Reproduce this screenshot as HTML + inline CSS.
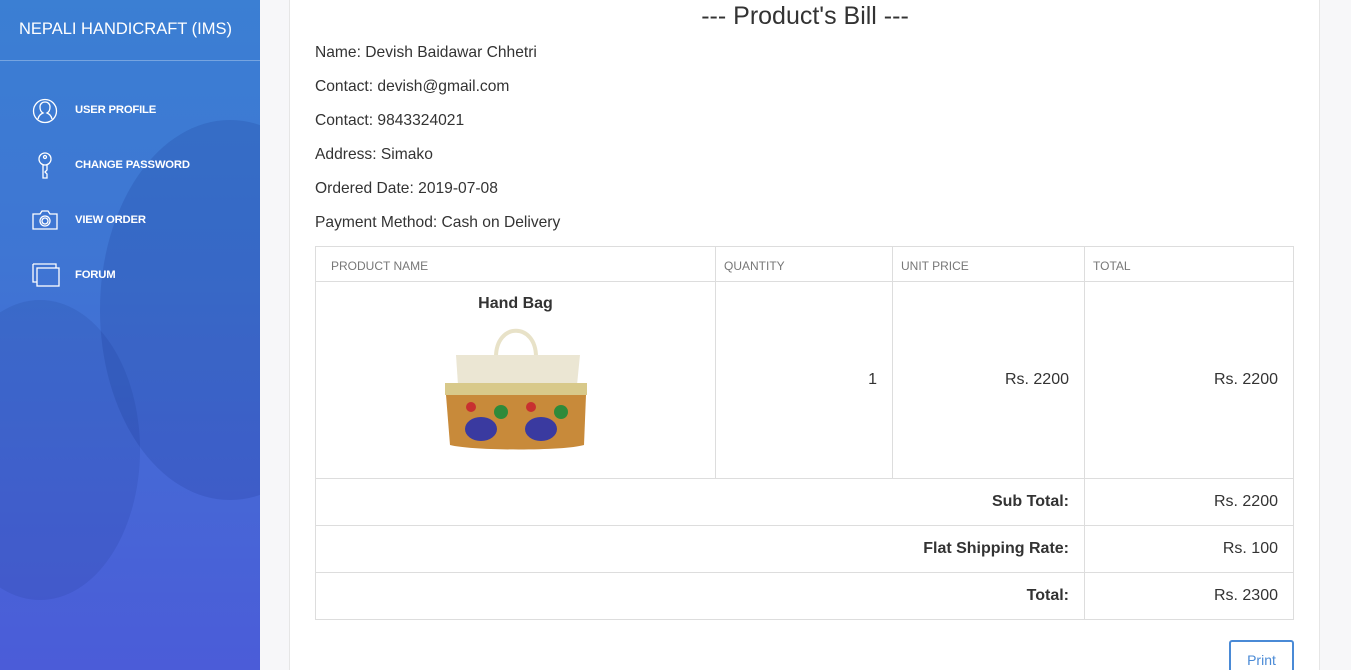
<!DOCTYPE html>
<html><head><style>
*{margin:0;padding:0;box-sizing:border-box}
html,body{width:1351px;height:670px;overflow:hidden}
body{background:#f7f7f9;font-family:"Liberation Sans",sans-serif;position:relative}
.sb{position:absolute;left:0;top:0;width:260px;height:670px;background:linear-gradient(180deg,#3b7fd3 0%,#3f75d3 40%,#4668d6 70%,#4b5cd8 100%);overflow:hidden}
.sb .blob{position:absolute;border-radius:50%;background:rgba(20,50,140,.18)}
.title{position:absolute;left:19px;top:20px;color:#fff;font-size:16.5px;}
.hr{position:absolute;left:0;top:60px;width:260px;height:1px;background:rgba(255,255,255,.3)}
.nav{position:absolute;left:75px;color:#fff;font-size:11.3px;font-weight:bold;letter-spacing:-.2px}
.ic{position:absolute;left:32px}
.main{position:absolute;left:289px;top:0;width:1031px;height:670px;background:#fff;border-left:1px solid #e6e6e6;border-right:1px solid #e6e6e6}
h1{position:absolute;left:0;width:1030px;top:2px;text-align:center;font-weight:300;font-size:25px;color:#333}
.info{position:absolute;left:25px;font-size:15.6px;color:#333}
table{position:absolute;left:25px;top:246px;width:979px;border-collapse:collapse;font-size:16px;color:#333}
td,th{border:1px solid #ddd}
th{height:35px;font-size:12px;color:#777;font-weight:normal;text-align:left;padding-left:15px;padding-top:4px}
.r{text-align:right;padding-right:15px}
.btn{position:absolute;left:939px;top:640px;width:65px;height:40px;border:2px solid #4a8ad6;border-radius:3px;color:#4a8ad6;font-size:14px;text-align:center;padding-top:10px}
</style></head><body>
<div class="sb">
<div class="blob" style="left:100px;top:120px;width:260px;height:380px"></div>
<div class="blob" style="left:-60px;top:300px;width:200px;height:300px;background:rgba(20,40,120,.12)"></div>
<div class="title">NEPALI HANDICRAFT (IMS)</div>
<div class="hr"></div>
<svg class="ic" style="top:98px" width="26" height="26" viewBox="0 0 26 26" fill="none" stroke="#fff" stroke-width="1.3"><circle cx="13" cy="13" r="11.5"/><path d="M6 21c1-4 3-5 5-6-2-1-3-3-3-6 0-3 2-5 5-5s5 2 5 5c0 3-1 5-3 6 2 1 4 2 5 6"/></svg>
<svg class="ic" style="top:152px;left:37px" width="16" height="28" viewBox="0 0 16 28" fill="none" stroke="#fff" stroke-width="1.3"><circle cx="8" cy="7" r="6"/><circle cx="8" cy="5" r="1.5"/><path d="M6 13v13h4v-4l-2-2 2-2v-5"/></svg>
<svg class="ic" style="top:210px" width="26" height="20" viewBox="0 0 26 20" fill="none" stroke="#fff" stroke-width="1.3"><path d="M1 4h7l2-3h6l2 3h7v15H1z"/><circle cx="13" cy="11" r="5"/><circle cx="13" cy="11" r="3"/></svg>
<svg class="ic" style="top:263px" width="28" height="24" viewBox="0 0 28 24" fill="none" stroke="#fff" stroke-width="1.3"><path d="M1 1h23v4M1 1v18h4"/><rect x="5" y="5" width="22" height="18"/></svg>
<div class="nav" style="top:104px">USER PROFILE</div>
<div class="nav" style="top:159px">CHANGE PASSWORD</div>
<div class="nav" style="top:214px">VIEW ORDER</div>
<div class="nav" style="top:269px">FORUM</div>
</div>
<div class="main">
<h1>--- Product's Bill ---</h1>
<div class="info" style="top:44px">Name: Devish Baidawar Chhetri</div>
<div class="info" style="top:78px">Contact: devish@gmail.com</div>
<div class="info" style="top:112px">Contact: 9843324021</div>
<div class="info" style="top:146px">Address: Simako</div>
<div class="info" style="top:180px">Ordered Date: 2019-07-08</div>
<div class="info" style="top:214px">Payment Method: Cash on Delivery</div>
<table>
<tr><th style="width:400px">PRODUCT NAME</th><th style="width:177px;padding-left:8px">QUANTITY</th><th style="width:192px;padding-left:8px">UNIT PRICE</th><th style="padding-left:8px">TOTAL</th></tr>
<tr style="height:197px"><td style="text-align:center;vertical-align:top;padding-top:13px"><b>Hand Bag</b><br>
<svg width="150" height="148" viewBox="0 0 150 148" style="margin-top:4px"><path d="M55 40 C55 5 95 5 95 40" fill="none" stroke="#e8e2c8" stroke-width="4"/><path d="M27 38h124l-3 30H29z" fill="#ebe6d3" transform="translate(-12 0)"/><rect x="16" y="66" width="142" height="12" fill="#d8c98a" transform="translate(-12 0)"/><path d="M17 78h140l-2 50c-20 6-110 6-134 0z" fill="#c88a3a" transform="translate(-12 0)"/><ellipse cx="40" cy="112" rx="16" ry="12" fill="#3a3aa0"/><ellipse cx="100" cy="112" rx="16" ry="12" fill="#3a3aa0"/><circle cx="60" cy="95" r="7" fill="#2e8a3a"/><circle cx="120" cy="95" r="7" fill="#2e8a3a"/><circle cx="30" cy="90" r="5" fill="#c83030"/><circle cx="90" cy="90" r="5" fill="#c83030"/></svg></td>
<td class="r">1</td><td class="r">Rs. 2200</td><td class="r">Rs. 2200</td></tr>
<tr style="height:47px"><td colspan="3" class="r"><b>Sub Total:</b></td><td class="r">Rs. 2200</td></tr>
<tr style="height:47px"><td colspan="3" class="r"><b>Flat Shipping Rate:</b></td><td class="r">Rs. 100</td></tr>
<tr style="height:47px"><td colspan="3" class="r"><b>Total:</b></td><td class="r">Rs. 2300</td></tr>
</table>
<div class="btn">Print</div>
</div>
</body></html>
